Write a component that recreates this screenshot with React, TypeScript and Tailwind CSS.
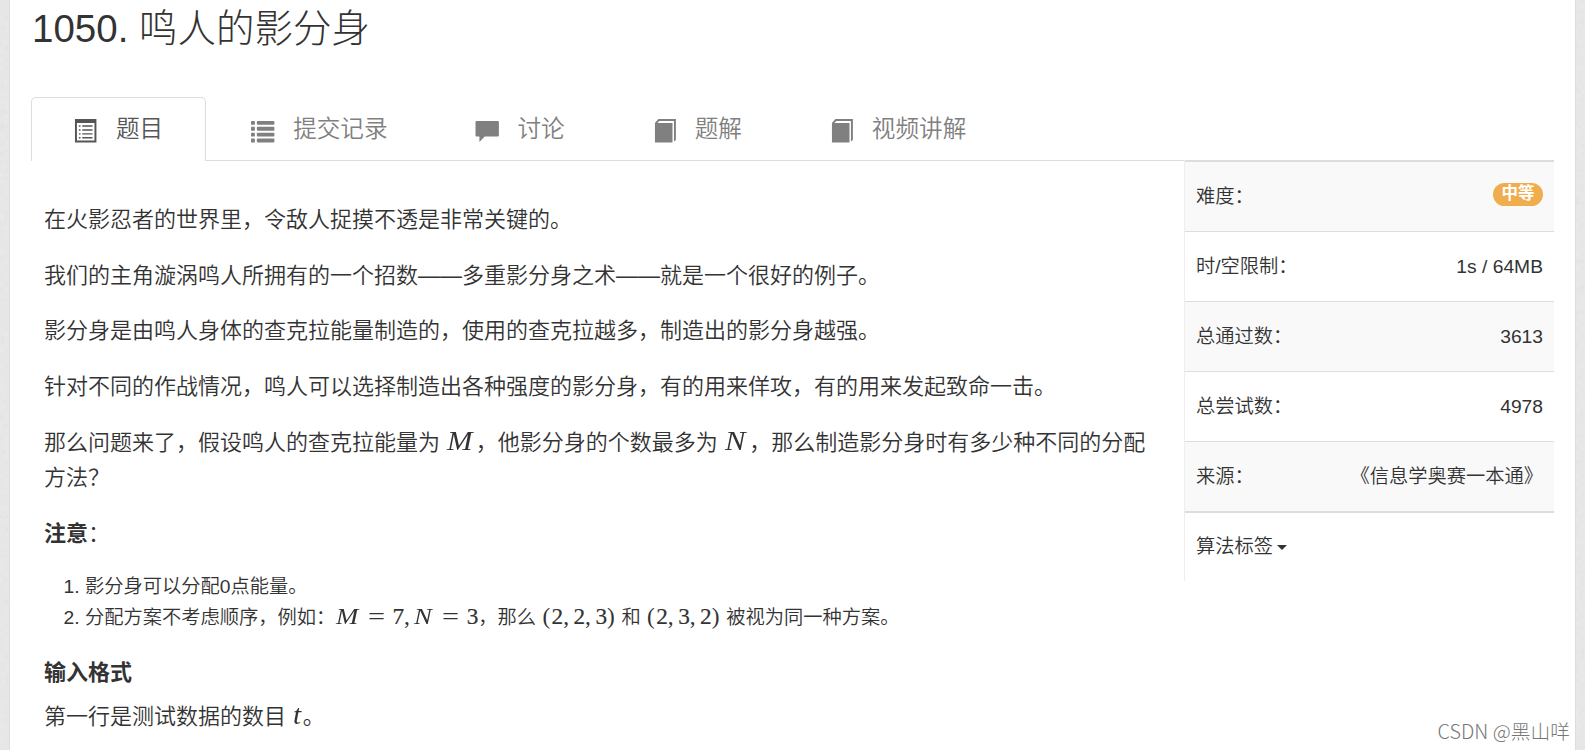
import React from 'react';

interface IconProps {
  className?: string;
}

interface Tab {
  label: string;
  icon: React.FC<IconProps>;
}

const ListAltIcon: React.FC<IconProps> = ({ className }) => (
  <svg viewBox="0 0 24 24" fill="currentColor" className={className}>
    <path fillRule="evenodd" d="M1 0h22v24H1zM3 4v18h18V4z" />
    <path d="M5 6.500h1.700v1.500H5zM8.500 6.500H19v1.500H8.500zM5 10.500h1.700V12H5zM8.500 10.500H19V12H8.500zM5 14.500h1.700V16H5zM8.500 14.500H19V16H8.500zM5 18.500h1.700V20H5zM8.500 18.500H19V20H8.500z" />
  </svg>
);

const ListIcon: React.FC<IconProps> = ({ className }) => (
  <svg viewBox="0 0 24 24" fill="currentColor" className={className}>
    {[2, 8, 14, 20].map((y) => (
      <g key={y}>
        <rect x="0" y={y} width="4" height="4" rx="0.500" />
        <rect x="6" y={y} width="18" height="4" rx="1" />
      </g>
    ))}
  </svg>
);

const CommentIcon: React.FC<IconProps> = ({ className }) => (
  <svg viewBox="0 0 24 24" fill="currentColor" className={className}>
    <path d="M0.500 2h22a1 1 0 0 1 1 1v14a1 1 0 0 1-1 1H9L3.500 23.500V18h-3a1 1 0 0 1-1-1V3a1 1 0 0 1 1-1z" />
  </svg>
);

const BookIcon: React.FC<IconProps> = ({ className }) => (
  <svg viewBox="0 0 24 24" fill="currentColor" className={className}>
    <path d="M2 4L5.500 0H23.500v21.500l-2 1.500V2H6.500L4.500 4H20v20H2z" />
  </svg>
);

const tabs: Tab[] = [
  { label: '题目', icon: ListAltIcon },
  { label: '提交记录', icon: ListIcon },
  { label: '讨论', icon: CommentIcon },
  { label: '题解', icon: BookIcon },
  { label: '视频讲解', icon: BookIcon }
];

const stats = [
  { label: '总通过数：', value: '3613' },
  { label: '总尝试数：', value: '4978' }
];

// advance widths of the math font, in em
const symbols: Record<string, string> = {
  M: 'w-[1.079em] italic scale-x-115',
  N: 'w-[0.912em] italic scale-x-115',
  t: 'w-[0.361em] italic scale-x-110',
  '=': 'w-[0.778em] mx-[0.278em] scale-x-130',
  ',': 'w-[0.278em] mr-[0.167em]',
  '(': 'w-[0.389em]',
  ')': 'w-[0.389em]'
};

const Formula: React.FC<{ tex: string }> = ({ tex }) => (
  <span className="ml-px whitespace-nowrap font-['Liberation_Serif',serif] text-[1.21em] font-normal leading-none">
    {tex.split('').map((ch, i) => (
      <span key={i} className={`inline-block origin-left ${symbols[ch] ?? 'w-[0.5em] [-webkit-text-stroke:0.2px_#333]'}`}>
        {ch}
      </span>
    ))}
  </span>
);

const InfoRow: React.FC<{ label: string; children: React.ReactNode; className: string }> = ({ label, children, className }) => (
  <div className={`flex h-[70px] items-center justify-between border-t border-[#ddd] px-[11px] pt-[2px] ${className}`}>
    <span>{label}</span>
    {children}
  </div>
);

export default function App() {
  return (
    <div className="relative h-[750px] overflow-hidden bg-[#e9e9e9] px-[9px] font-['Liberation_Sans','Noto_Sans_CJK_SC',sans-serif] font-[350] text-[#333]">
      <svg className="absolute inset-0 size-full opacity-10">
        <filter id="paper">
          <feTurbulence type="fractalNoise" baseFrequency="0.2" numOctaves="3" />
          <feColorMatrix type="saturate" values="0" />
        </filter>
        <rect width="100%" height="100%" filter="url(#paper)" />
      </svg>
      <div className="relative h-full border-x border-[#ddd] bg-white px-[21px]">
        <h1 className="h-[97px] pl-px pt-[6px] text-[38.5px] font-light leading-[46px]">1050. 鸣人的影分身</h1>

        <nav className="flex h-[64px] border-b border-[#ddd] text-[23.600px]">
          {tabs.map(({ label, icon: Icon }, i) => (
            <a
              key={label}
              className={
                i === 0
                  ? 'mr-[2px] flex h-[64px] items-center rounded-t-[5px] border border-b-0 border-[#ddd] bg-white px-[42px] text-[#555]'
                  : 'mr-[2px] flex h-[63px] items-center border border-b-0 border-transparent px-[42px] text-[#808080]'
              }
            >
              <Icon className="mr-[18.600px] mt-[3px] size-[23.400px] overflow-visible" />
              <span className="leading-[33px]">{label}</span>
            </a>
          ))}
        </nav>

        <div className="flex items-start">
          <main className="w-[1153px] pl-[13px] pt-[41px] text-[22px] leading-[35px]">
            <p className="mb-[20.700px]">在火影忍者的世界里，令敌人捉摸不透是非常关键的。</p>
            <p className="mb-[20.700px]">我们的主角漩涡鸣人所拥有的一个招数——多重影分身之术——就是一个很好的例子。</p>
            <p className="mb-[20.700px]">影分身是由鸣人身体的查克拉能量制造的，使用的查克拉越多，制造出的影分身越强。</p>
            <p className="mb-[21px]">针对不同的作战情况，鸣人可以选择制造出各种强度的影分身，有的用来佯攻，有的用来发起致命一击。</p>
            <p className="mb-[21px]">
              那么问题来了，假设鸣人的查克拉能量为 <Formula tex="M" />，他影分身的个数最多为 <Formula tex="N" />，那么制造影分身时有多少种不同的分配
              <br />
              方法？
            </p>
            <p className="mb-[20px]"><b>注意</b>：</p>
            <ol className="mb-[22px] list-decimal pl-[41px] text-[19.250px] leading-[31px]">
              <li>影分身可以分配0点能量。</li>
              <li>
                分配方案不考虑顺序，例如：<Formula tex="M=7,N=3" />，那么 <Formula tex="(2,2,3)" /> 和 <Formula tex="(2,3,2)" /> 被视为同一种方案。
              </li>
            </ol>
            <h4 className="mb-[9px] font-bold">输入格式</h4>
            <p>第一行是测试数据的数目 <Formula tex="t" />。</p>
          </main>

          <aside className="-mt-px h-[421px] flex-1 border-l border-[#eee] text-[19.250px]">
            <InfoRow label="难度：" className="h-[71px] border-t-2 bg-[#f9f9f9]">
              <span className="mb-[6px] h-[23px] w-[50px] rounded-full bg-[#f0ad4e] text-center text-[16.500px] font-bold leading-[21px] text-white">中等</span>
            </InfoRow>
            <InfoRow label="时/空限制：" className=""><span>1s / 64MB</span></InfoRow>
            {stats.map((stat, i) => (
              <InfoRow key={stat.label} label={stat.label} className={i % 2 === 0 ? 'bg-[#f9f9f9]' : ''}>
                <span>{stat.value}</span>
              </InfoRow>
            ))}
            <InfoRow label="来源：" className="bg-[#f9f9f9]"><span>《信息学奥赛一本通》</span></InfoRow>
            <div className="flex h-[70px] items-center border-t-2 border-[#ddd] px-[11px]">
              算法标签
              <span className="ml-[4px] border-x-[5px] border-t-[5px] border-x-transparent border-t-[#333]" />
            </div>
          </aside>
        </div>
      </div>
      <div className="absolute bottom-[5px] right-[15px] font-['Noto_Sans_CJK_SC',sans-serif] text-[19.800px] font-light leading-[28px] text-[#777]">CSDN @黑山咩</div>
    </div>
  );
}
